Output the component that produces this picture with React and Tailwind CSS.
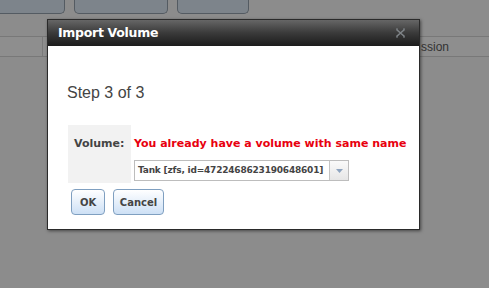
export default function App() {
  return (
    <div className="relative w-[489px] h-[288px] overflow-hidden bg-[#8c8c8c]" style={{ fontFamily: '"DejaVu Sans", Verdana, sans-serif' }}>
      {/* background page */}
      <div className="flex gap-[9px]">
        <div className="w-[65px] h-[14px] bg-[#7d848b] border-b border-r border-[#545b62] rounded-br-[5px]" />
        <div className="w-[94px] h-[14px] bg-[#7d848b] border-b border-x border-[#545b62] rounded-b-[5px]" />
        <div className="w-[72px] h-[14px] bg-[#7d848b] border-b border-x border-[#545b62] rounded-b-[5px]" />
      </div>
      <div className="mt-[22px] h-[21px] border-y border-[#787878] bg-[#8e8e8e] flex">
        <div className="w-[43px] border-r border-[#7a7a7a]" />
        <div className="flex-1 flex items-center justify-end pr-[40px] text-[12px] text-[#333]" style={{ fontFamily: '"Liberation Sans", Arial, sans-serif' }}>
          ssion
        </div>
      </div>

      {/* modal */}
      <div className="absolute left-[47px] top-[19px] w-[373px] h-[211px] bg-white border border-[#2a2a2a] shadow-[1px_1px_3px_rgba(0,0,0,0.5)] flex flex-col">
        <div className="h-[26px] bg-gradient-to-b from-[#666] via-[#3a3a3a] to-[#1c1c1c] flex items-center justify-between pl-[10px] pr-[13px]">
          <span className="text-white font-bold text-[12.5px] tracking-[-0.3px]">Import Volume</span>
          <svg width="11" height="10" viewBox="0 0 11 10">
            <g stroke="#7f8488" strokeWidth="1.6" fill="none">
              <path d="M1.5 1.5 L9.5 8.5 M9.5 1.5 L1.5 8.5" />
              <path d="M1 1 h2 M8 1 h2 M1 9 h2 M8 9 h2" strokeWidth="1.2" />
            </g>
          </svg>
        </div>
        <div className="pl-[19px] pt-[37px] text-[16px] text-[#444] leading-[20px]" style={{ fontFamily: '"Liberation Sans", Arial, sans-serif' }}>
          Step 3 of 3
        </div>
        <div className="mt-[22px] ml-[20px] flex">
          <div className="w-[63px] h-[58px] bg-[#f2f2f2] pl-[6px] pt-[12px] text-[11px] font-bold text-[#444] leading-[14px]">
            Volume:
          </div>
          <div className="pl-[3px] pt-[12px] flex flex-col">
            <div className="text-[11px] font-bold text-[#e8000e] leading-[13px]">You already have a volume with same name</div>
            <div className="mt-[10px] w-[215px] h-[21px] border border-[#bdbdbd] flex items-stretch">
              <div className="flex-1 flex items-center pl-[3px] text-[9px] font-bold text-[#444] tracking-[-0.2px]">Tank [zfs, id=4722468623190648601]</div>
              <div className="w-[19px] border-l border-[#c4c4c4] bg-gradient-to-b from-[#fafafa] to-[#e6e6e6] flex items-center justify-center">
                <svg width="7" height="4" viewBox="0 0 7 4"><path d="M0 0 H7 L3.5 4 Z" fill="#8ea4bf" /></svg>
              </div>
            </div>
          </div>
        </div>
        <div className="mt-[6px] ml-[23px] flex gap-[8px]">
          <button className="w-[34px] h-[26px] rounded-[4px] border border-[#7f9fc0] bg-gradient-to-b from-white to-[#cde0f5] text-[10px] font-bold text-[#444]">OK</button>
          <button className="w-[51px] h-[26px] rounded-[4px] border border-[#7f9fc0] bg-gradient-to-b from-white to-[#cde0f5] text-[10px] font-bold text-[#444]">Cancel</button>
        </div>
      </div>
    </div>
  );
}
